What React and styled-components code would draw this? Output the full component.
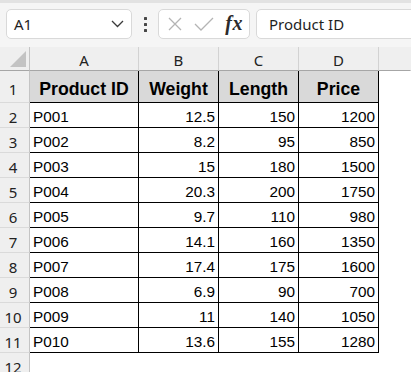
import React from 'react';
import styled, { createGlobalStyle } from 'styled-components';

const GlobalStyle = createGlobalStyle`
  html, body { margin: 0; padding: 0; background: #fff; }
  body { width: 411px; height: 372px; overflow: hidden; }
  * { box-sizing: border-box; }
`;

const COLS = '30px 109px 80px 80px 80px 1fr';

const Window = styled.div`
  display: flex;
  flex-direction: column;
  width: 411px;
  height: 372px;
  overflow: hidden;
  background: #fff;
`;

const TopStrip = styled.div`
  height: 3px;
  flex: none;
  background: #e2e2e2;
  box-shadow: 0 1px 2px rgba(0, 0, 0, 0.08);
`;

const Toolbar = styled.div`
  height: 44px;
  flex: none;
  background: #f5f5f5;
  display: flex;
  align-items: flex-start;
  padding: 6px 0 0 6px;
  overflow: hidden;
  font-family: "Noto Sans", "Open Sans", sans-serif;
`;

const Box = styled.div`
  height: 30px;
  background: #fff;
  border: 1px solid #d9d9d9;
  border-radius: 5px;
  display: flex;
  align-items: center;
`;

const NameBox = styled(Box)`
  width: 126px;
  padding: 0 7px 0 7px;
  justify-content: space-between;
  font-size: 15px;
  color: #1f1f1f;
`;

const Dots = styled.div`
  width: 26px;
  height: 30px;
  display: flex;
  flex-direction: column;
  align-items: center;
  justify-content: center;
  gap: 3px;
  & > span {
    width: 3px;
    height: 3px;
    background: #474747;
    border-radius: 0.5px;
  }
`;

const IconBox = styled(Box)`
  width: 92px;
  padding: 0 4px 0 8px;
  justify-content: space-between;
`;

const Fx = styled.span`
  font-family: "Liberation Serif", "DejaVu Serif", serif;
  font-style: italic;
  font-weight: bold;
  font-size: 20px;
  color: #2b2b2b;
  letter-spacing: 0.5px;
  margin-top: -2px;
  padding-right: 2px;
`;

const FormulaBar = styled(Box)`
  flex: 1;
  margin-left: 6px;
  margin-right: -10px;
  padding-left: 12px;
  font-size: 15px;
  color: #1f1f1f;
`;

const Row = styled.div`
  display: grid;
  grid-template-columns: ${COLS};
  height: ${(p) => p.$h}px;
  flex: none;
`;

const ColHead = styled.div`
  background: #efefef;
  border-right: 1px solid ${(p) => (p.$last ? 'transparent' : '#d2d2d2')};
  border-bottom: 1px solid #a6a6a6;
  display: flex;
  align-items: center;
  justify-content: center;
  font-family: "Noto Sans", "Open Sans", sans-serif;
  font-size: 15px;
  color: #222;
  padding-top: 3px;
`;

const Corner = styled(ColHead)`
  position: relative;
  border-right-color: #c4c4c4;
`;

const Triangle = styled.div`
  position: absolute;
  right: 3px;
  bottom: 3px;
  width: 0;
  height: 0;
  border-left: 16px solid transparent;
  border-bottom: 16px solid #c3c3c3;
`;

const RowHead = styled.div`
  background: #efefef;
  border-right: 1px solid #c4c4c4;
  border-bottom: 1px solid #dadada;
  display: flex;
  align-items: center;
  justify-content: center;
  padding-right: 3px;
  padding-top: 4px;
  font-family: "Noto Sans", "Open Sans", sans-serif;
  font-size: 15px;
  color: #222;
`;

const Cell = styled.div`
  border-right: 1px solid #000;
  border-bottom: 1px solid #000;
  display: flex;
  align-items: center;
  padding: 4px 3px 0 3px;
  font-family: "Liberation Sans", Arial, sans-serif;
  font-size: 15.3px;
  color: #000;
  white-space: nowrap;
  justify-content: ${(p) => (p.$num ? 'flex-end' : 'flex-start')};
`;

const HeadCell = styled(Cell)`
  background: #d9d9d9;
  justify-content: center;
  font-weight: bold;
  font-size: 17.7px;
  padding: 5px 0 0 0;
`;

const Blank = styled.div`
  background: #fff;
`;

const XIcon = () => (
  <svg width="16" height="16" viewBox="0 0 16 16">
    <path d="M2 2 L14 14 M14 2 L2 14" stroke="#b4b4b4" strokeWidth="1.3" fill="none" />
  </svg>
);

const CheckIcon = () => (
  <svg width="20" height="16" viewBox="0 0 20 16">
    <path d="M1 8 L7 14 L19 2" stroke="#b4b4b4" strokeWidth="1.3" fill="none" />
  </svg>
);

const Chevron = () => (
  <svg width="13" height="8" viewBox="0 0 13 8">
    <path d="M1 1 L6.5 6.5 L12 1" stroke="#3a3a3a" strokeWidth="1.3" fill="none" />
  </svg>
);

const data = [
  ['P001', '12.5', '150', '1200'],
  ['P002', '8.2', '95', '850'],
  ['P003', '15', '180', '1500'],
  ['P004', '20.3', '200', '1750'],
  ['P005', '9.7', '110', '980'],
  ['P006', '14.1', '160', '1350'],
  ['P007', '17.4', '175', '1600'],
  ['P008', '6.9', '90', '700'],
  ['P009', '11', '140', '1050'],
  ['P010', '13.6', '155', '1280'],
];

export default function App() {
  return (
    <Window>
      <GlobalStyle />
      <TopStrip />
      <Toolbar>
        <NameBox>
          <span>A1</span>
          <Chevron />
        </NameBox>
        <Dots>
          <span />
          <span />
          <span />
        </Dots>
        <IconBox>
          <XIcon />
          <CheckIcon />
          <Fx>fx</Fx>
        </IconBox>
        <FormulaBar>Product ID</FormulaBar>
      </Toolbar>
      <Row $h={24}>
        <Corner>
          <Triangle />
        </Corner>
        <ColHead>A</ColHead>
        <ColHead>B</ColHead>
        <ColHead>C</ColHead>
        <ColHead>D</ColHead>
        <ColHead $last />
      </Row>
      <Row $h={32}>
        <RowHead>1</RowHead>
        <HeadCell>Product ID</HeadCell>
        <HeadCell>Weight</HeadCell>
        <HeadCell>Length</HeadCell>
        <HeadCell>Price</HeadCell>
        <Blank />
      </Row>
      {data.map((r, i) => (
        <Row $h={25} key={r[0]}>
          <RowHead>{i + 2}</RowHead>
          <Cell>{r[0]}</Cell>
          <Cell $num>{r[1]}</Cell>
          <Cell $num>{r[2]}</Cell>
          <Cell $num>{r[3]}</Cell>
          <Blank />
        </Row>
      ))}
      <Row $h={25}>
        <RowHead>12</RowHead>
        <Blank />
        <Blank />
        <Blank />
        <Blank />
        <Blank />
      </Row>
    </Window>
  );
}
